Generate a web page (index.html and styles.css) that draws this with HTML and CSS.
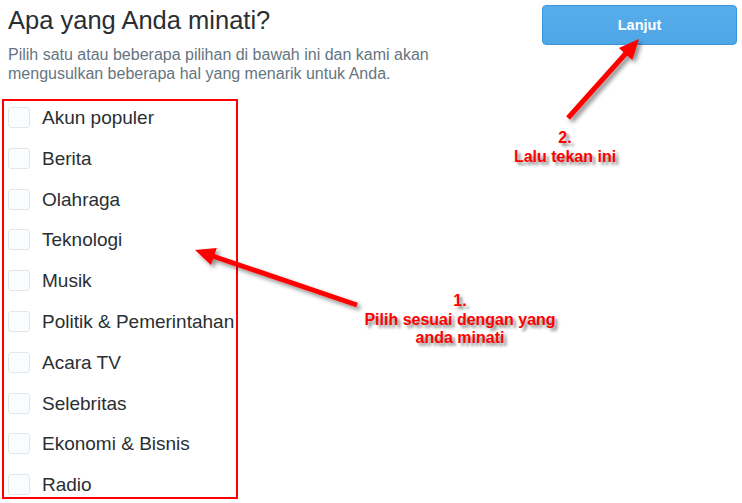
FILE: index.html
```html
<!DOCTYPE html>
<html lang="id">
<head>
<meta charset="utf-8">
<title>Apa yang Anda minati?</title>
<link rel="stylesheet" href="styles.css">
</head>
<body>
<div class="page">
  <header class="header">
    <div class="intro">
      <h1 class="title">Apa yang Anda minati?</h1>
      <p class="subtitle">Pilih satu atau beberapa pilihan di bawah ini dan kami akan mengusulkan beberapa hal yang menarik untuk Anda.</p>
    </div>
    <button class="btn" type="button">Lanjut</button>
  </header>

  <ul class="topics">
    <li class="topic"><span class="box"></span><span class="label">Akun populer</span></li>
    <li class="topic"><span class="box"></span><span class="label">Berita</span></li>
    <li class="topic"><span class="box"></span><span class="label">Olahraga</span></li>
    <li class="topic"><span class="box"></span><span class="label">Teknologi</span></li>
    <li class="topic"><span class="box"></span><span class="label">Musik</span></li>
    <li class="topic"><span class="box"></span><span class="label">Politik &amp; Pemerintahan</span></li>
    <li class="topic"><span class="box"></span><span class="label">Acara TV</span></li>
    <li class="topic"><span class="box"></span><span class="label">Selebritas</span></li>
    <li class="topic"><span class="box"></span><span class="label">Ekonomi &amp; Bisnis</span></li>
    <li class="topic"><span class="box"></span><span class="label">Radio</span></li>
  </ul>

  <svg class="arrows" width="742" height="503" viewBox="0 0 742 503" aria-hidden="true">
    <defs>
      <filter id="sh" x="-20%" y="-20%" width="140%" height="140%">
        <feDropShadow dx="3" dy="3" stdDeviation="2" flood-color="#000" flood-opacity="0.45"/>
      </filter>
    </defs>
    <g filter="url(#sh)" fill="#ff0000" stroke="#ff0000">
      <line x1="357" y1="305" x2="211" y2="255.5" stroke-width="5"/>
      <polygon points="195,250 216.8,247.9 211,264.9" stroke="none"/>
      <line x1="568" y1="118" x2="628" y2="51" stroke-width="5"/>
      <polygon points="639,39 632.3,59.9 618.9,47.9" stroke="none"/>
    </g>
  </svg>

  <div class="note note-1">1.<br>Pilih sesuai dengan yang<br>anda minati</div>
  <div class="note note-2">2.<br>Lalu tekan ini</div>
</div>
</body>
</html>
```

FILE: styles.css
```css
* { box-sizing: border-box; }

html, body {
  margin: 0;
  padding: 0;
  background: #ffffff;
}

body {
  font-family: "Liberation Sans", Arial, Helvetica, sans-serif;
  color: #292f33;
  width: 742px;
  height: 503px;
  overflow: hidden;
}

.page {
  position: relative;
  width: 742px;
  height: 503px;
}

.header {
  display: flex;
  justify-content: space-between;
  align-items: flex-start;
  padding: 0 5px 0 8px;
}

.intro {
  padding-top: 5px;
}

.title {
  margin: 0;
  font-size: 25.5px;
  line-height: 30px;
  font-weight: normal;
  color: #292f33;
}

.subtitle {
  margin: 10px 0 0;
  width: 440px;
  font-size: 16px;
  line-height: 19px;
  color: #66757f;
}

.btn {
  margin-top: 5px;
  width: 195px;
  height: 40px;
  border: 1px solid #3b94d9;
  border-radius: 4px;
  background: linear-gradient(#57adec, #4fa6e6);
  color: #ffffff;
  font-family: "Liberation Sans", Arial, sans-serif;
  font-weight: bold;
  font-size: 14.5px;
  padding: 0;
}

.topics {
  list-style: none;
  margin: 16px 0 0 2px;
  padding: 6px 0 0 4px;
  width: 236px;
  height: 400px;
  border: 2px solid #ff0000;
}

.topic {
  display: flex;
  align-items: flex-start;
  height: 40.8px;
}

.box {
  flex: none;
  width: 22px;
  height: 21px;
  border: 1px solid #e1e8ed;
  border-radius: 3px;
  background: #fbfcfd;
}

.label {
  margin-left: 12px;
  font-size: 19px;
  line-height: 21px;
  color: #292f33;
  white-space: nowrap;
}

.arrows {
  position: absolute;
  left: 0;
  top: 0;
  pointer-events: none;
}

.note {
  position: absolute;
  text-align: center;
  color: #ff0000;
  font-weight: bold;
  font-size: 16px;
  line-height: 18.5px;
  text-shadow: 3px 3px 3px rgba(0, 0, 0, 0.45);
  white-space: nowrap;
}

.note-1 {
  left: 360px;
  top: 292px;
  width: 200px;
}

.note-2 {
  left: 495px;
  top: 129px;
  width: 140px;
}
```
